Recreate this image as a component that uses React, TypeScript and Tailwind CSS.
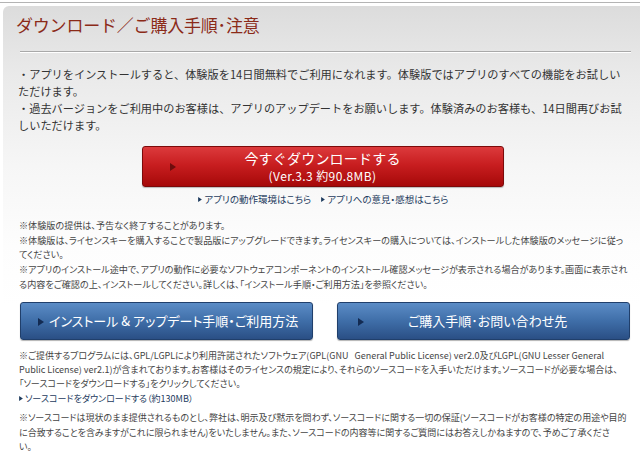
const jp = "font-['Noto_Sans_CJK_JP','Noto_Sans',sans-serif]";

function Tri({ className }: { className: string }) {
  return (
    <svg width="6" height="8" viewBox="0 0 6 8" className={className}>
      <path d="M0 0 L6 4 L0 8 Z" fill="currentColor" />
    </svg>
  );
}

export default function App() {
  return (
    <div className={`w-[640px] h-[455px] overflow-hidden bg-white text-[#333] ${jp}`}>
      <div className="h-[2px]" />
      <div className="border-t border-[#b4b4b4]" />
      <div className="mt-[3px] ml-[3px] rounded-tl-[6px] bg-[linear-gradient(to_bottom,#dcdcdc_0px,#eaeaea_70px,#f6f6f6_160px,#fdfdfd_240px,#ffffff_300px)] h-[460px]">
        {/* Header */}
        <div className="pl-[13px] pr-[9px] pt-[5px]">
          <h1 className="text-[17px] leading-[28px] text-[#8b2a18] tracking-[-0.2px]">
            ダウンロード／ご購入手順･注意
          </h1>
          <div className="mt-[12px] ml-[4px] border-t border-[#a9a9a9] border-b-white border-b" />
        </div>

        {/* Intro */}
        <div className="pl-[15px] pt-[13px] text-[11.2px] leading-[17px] text-[#333] whitespace-nowrap">
          <p>
            ・アプリをインストールすると、体験版を14日間無料でご利用になれます。体験版ではアプリのすべての機能をお試しい
            <br />
            ただけます。
          </p>
          <p>
            ・過去バージョンをご利用中のお客様は、アプリのアップデートをお願いします。体験済みのお客様も、14日間再びお試
            <br />
            しいただけます。
          </p>
        </div>

        {/* Download button */}
        <div className="flex justify-center mt-[12px] pl-[2px]">
          <button className="relative w-[362px] h-[41px] rounded-[3px] border border-[#7c0a0a] bg-[linear-gradient(to_bottom,#dc3a3c_0%,#c81e20_45%,#a60909_100%)] text-white flex flex-col items-center justify-center gap-[1px] shadow-[0_1px_1px_rgba(0,0,0,0.25)]">
            <Tri className="absolute left-[27px] top-[16px] text-[#6e0d0d]" />
            <span className="text-[14px] leading-[17px] tracking-[0.2px]">今すぐダウンロードする</span>
            <span className="text-[12px] leading-[15px] tracking-[0.4px]">(Ver.3.3 約90.8MB)</span>
          </button>
        </div>
        <div className="flex justify-center gap-[10px] mt-[5px] pl-[4px] text-[9.5px] leading-[14px] text-[#1d3b5e] [font-feature-settings:'palt']">
          <span className="flex items-center gap-[2px]">
            <Tri className="w-[4px] h-[5px] text-[#1d3b5e]" />
            アプリの動作環境はこちら
          </span>
          <span className="flex items-center gap-[2px]">
            <Tri className="w-[4px] h-[5px] text-[#1d3b5e]" />
            アプリへの意見・感想はこちら
          </span>
        </div>

        {/* Notes */}
        <div className="pl-[16px] mt-[12px] text-[9.1px] leading-[14.7px] text-[#444] whitespace-nowrap [font-feature-settings:'palt']">
          <p>※体験版の提供は、予告なく終了することがあります。</p>
          <p>
            ※体験版は、ライセンスキーを購入することで製品版にアップグレードできます。ライセンスキーの購入については、インストールした体験版のメッセージに従っ
            <br />
            てください。
          </p>
          <p>
            ※アプリのインストール途中で、アプリの動作に必要なソフトウェアコンポーネントのインストール確認メッセージが表示される場合があります。画面に表示され
            <br />
            る内容をご確認の上、インストールしてください。詳しくは、「インストール手順・ご利用方法」を参照ください。
          </p>
        </div>

        {/* Blue buttons */}
        <div className="flex gap-[24px] pl-[17px] mt-[10px] whitespace-nowrap [font-feature-settings:'palt']">
          <button className="relative w-[293px] h-[38px] rounded-[3px] border border-[#203f6b] bg-[linear-gradient(to_bottom,#5b8cc6_0%,#3f6ea8_50%,#2a4f85_100%)] text-white text-[13px] flex items-center pl-[28px] shadow-[0_1px_1px_rgba(0,0,0,0.3)]">
            <Tri className="absolute left-[17px] top-[15px] text-[#132b52]" />
            インストール &amp; アップデート手順・ご利用方法
          </button>
          <button className="relative w-[293px] h-[38px] rounded-[3px] border border-[#203f6b] bg-[linear-gradient(to_bottom,#5b8cc6_0%,#3f6ea8_50%,#2a4f85_100%)] text-white text-[13px] flex items-center justify-center pl-[8px] shadow-[0_1px_1px_rgba(0,0,0,0.3)]">
            <Tri className="absolute left-[20px] top-[15px] text-[#132b52]" />
            ご購入手順･お問い合わせ先
          </button>
        </div>

        {/* License notes */}
        <div className="pl-[16px] mt-[9px] text-[9px] leading-[14.4px] text-[#444] whitespace-nowrap [font-feature-settings:'palt']">
          <p>
            ※ご提供するプログラムには、GPL/LGPLにより利用許諾されたソフトウェア(GPL(GNU&nbsp;&nbsp; General Public License) ver2.0及びLGPL(GNU Lesser General
            <br />
            Public License) ver2.1)が含まれております。お客様はそのライセンスの規定により、それらのソースコードを入手いただけます。ソースコードが必要な場合は、
            <br />
            「ソースコードをダウンロードする」をクリックしてください。
          </p>
          <p className="flex items-center gap-[2px] text-[#1d3b5e]">
            <Tri className="w-[4px] h-[5px] text-[#1d3b5e]" />
            ソースコードをダウンロードする（約130MB）
          </p>
          <p className="mt-[5px]">
            ※ソースコードは現状のまま提供されるものとし、弊社は、明示及び黙示を問わず、ソースコードに関する一切の保証(ソースコードがお客様の特定の用途や目的
            <br />
            に合致することを含みますがこれに限られません)をいたしません。また、ソースコードの内容等に関するご質問にはお答えしかねますので、予めご了承くださ
            <br />
            い。
          </p>
        </div>
      </div>
    </div>
  );
}
